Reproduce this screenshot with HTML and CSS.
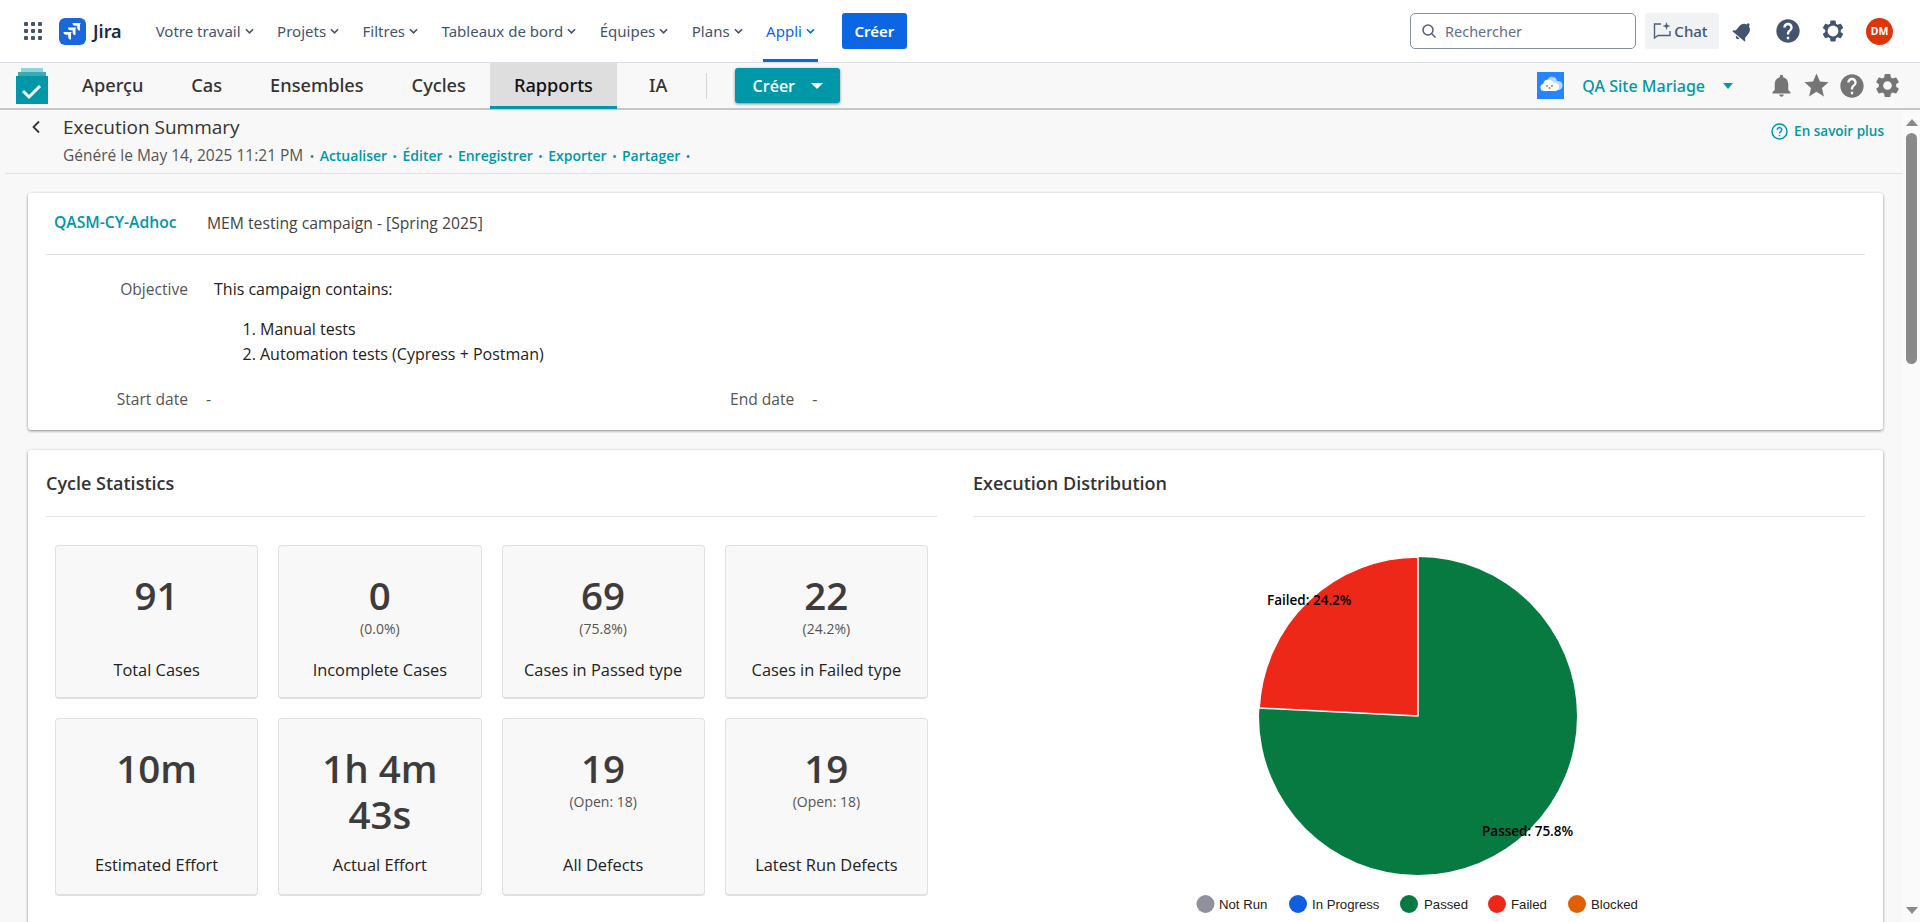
FILE: index.html
```html
<!DOCTYPE html>
<html lang="fr">
<head>
  <meta charset="UTF-8">
  <title>Execution Summary</title>
  <link rel="stylesheet" href="styles.css">
</head>
<body>

<svg class="defs" width="0" height="0">
  <symbol id="i-gear" viewBox="0 0 24 24"><path fill-rule="evenodd" d="M19.14 12.94c.04-.3.06-.61.06-.94 0-.32-.02-.64-.07-.94l2.03-1.58a.49.49 0 0 0 .12-.61l-1.92-3.32a.488.488 0 0 0-.59-.22l-2.39.96c-.5-.38-1.03-.7-1.62-.94l-.36-2.54a.484.484 0 0 0-.48-.41h-3.84c-.24 0-.43.17-.47.41l-.36 2.54c-.59.24-1.13.57-1.62.94l-2.39-.96c-.22-.08-.47 0-.59.22L2.74 8.87c-.12.21-.08.47.12.61l2.03 1.58c-.05.3-.09.63-.09.94s.02.64.07.94l-2.03 1.58a.49.49 0 0 0-.12.61l1.92 3.32c.12.22.37.29.59.22l2.39-.96c.5.38 1.03.7 1.62.94l.36 2.54c.05.24.24.41.48.41h3.84c.24 0 .44-.17.47-.41l.36-2.54c.59-.24 1.13-.56 1.62-.94l2.39.96c.22.08.47 0 .59-.22l1.92-3.32c.12-.22.07-.47-.12-.61l-2.01-1.58zM12 15.6c-1.98 0-3.6-1.62-3.6-3.6s1.62-3.6 3.6-3.6 3.6 1.62 3.6 3.6-1.62 3.6-3.6 3.6z"/></symbol>
  <symbol id="i-help" viewBox="0 0 24 24"><path d="M12 2C6.48 2 2 6.48 2 12s4.48 10 10 10 10-4.48 10-10S17.52 2 12 2zm1 17h-2v-2h2v2zm2.07-7.75l-.9.92C13.45 12.9 13 13.5 13 15h-2v-.5c0-1.1.45-2.1 1.17-2.83l1.24-1.26c.37-.36.59-.86.59-1.41 0-1.1-.9-2-2-2s-2 .9-2 2H8c0-2.21 1.79-4 4-4s4 1.79 4 4c0 .88-.36 1.68-.93 2.25z"/></symbol>
  <symbol id="i-bell" viewBox="0 0 24 24"><path d="M12 22c1.1 0 2-.9 2-2h-4c0 1.1.9 2 2 2zm6-6v-5c0-3.07-1.63-5.64-4.5-6.32V4c0-.83-.67-1.5-1.5-1.5s-1.5.67-1.5 1.5v.68C7.64 5.36 6 7.92 6 11v5l-2 2v1h16v-1l-2-2z"/></symbol>
  <symbol id="i-star" viewBox="0 0 24 24"><path d="M12 17.27L18.18 21l-1.64-7.03L22 9.24l-7.19-.61L12 2 9.19 8.63 2 9.24l5.46 4.73L5.82 21z"/></symbol>
</svg>

<header class="topnav">
  <svg class="apps" width="18" height="18" viewBox="0 0 18 18">
    <rect x="0" y="0" width="4" height="4" rx="1"/><rect x="7" y="0" width="4" height="4" rx="1"/><rect x="14" y="0" width="4" height="4" rx="1"/>
    <rect x="0" y="7" width="4" height="4" rx="1"/><rect x="7" y="7" width="4" height="4" rx="1"/><rect x="14" y="7" width="4" height="4" rx="1"/>
    <rect x="0" y="14" width="4" height="4" rx="1"/><rect x="7" y="14" width="4" height="4" rx="1"/><rect x="14" y="14" width="4" height="4" rx="1"/>
  </svg>
  <svg class="jira-logo" width="27" height="27" viewBox="0 0 27 27">
    <rect width="27" height="27" rx="6" fill="#1868db"/>
    <path fill="#fff" d="M22 5h-8.500a2.800 2.800 0 0 0 2.800 2.800h1.900v1.900a2.800 2.800 0 0 0 2.800 2.800V6z"/>
    <path fill="#fff" d="M17.500 9.500H9a2.800 2.800 0 0 0 2.800 2.800h1.900v1.900a2.800 2.800 0 0 0 2.800 2.800v-6.500z"/>
    <path fill="#fff" d="M13 14H4.500a2.800 2.800 0 0 0 2.800 2.800h1.900v1.900a2.800 2.800 0 0 0 2.800 2.800V15z"/>
  </svg>
  <span class="jira-name">Jira</span>
  <nav class="mainmenu">
    <a class="menu-item">Votre travail<svg class="chev" viewBox="0 0 10 6"><path d="M1 1l4 4 4-4"/></svg></a>
    <a class="menu-item">Projets<svg class="chev" viewBox="0 0 10 6"><path d="M1 1l4 4 4-4"/></svg></a>
    <a class="menu-item">Filtres<svg class="chev" viewBox="0 0 10 6"><path d="M1 1l4 4 4-4"/></svg></a>
    <a class="menu-item">Tableaux de bord<svg class="chev" viewBox="0 0 10 6"><path d="M1 1l4 4 4-4"/></svg></a>
    <a class="menu-item">Équipes<svg class="chev" viewBox="0 0 10 6"><path d="M1 1l4 4 4-4"/></svg></a>
    <a class="menu-item">Plans<svg class="chev" viewBox="0 0 10 6"><path d="M1 1l4 4 4-4"/></svg></a>
    <a class="menu-item active">Appli<svg class="chev" viewBox="0 0 10 6"><path d="M1 1l4 4 4-4"/></svg></a>
  </nav>
  <button class="create-top">Créer</button>

  <div class="top-right">
    <div class="search">
      <svg width="16" height="16" viewBox="0 0 16 16" fill="none" stroke="#505f79" stroke-width="1.5"><circle cx="7" cy="7" r="5"/><path d="M10.8 10.8L14.5 14.5"/></svg>
      <span>Rechercher</span>
    </div>
    <button class="chat">
      <svg width="20" height="20" viewBox="0 0 20 20" fill="none" stroke="#505f79" stroke-width="1.4"><path d="M9 3H2.500v14l3.500-2.500h12V10"/><path fill="#505f79" stroke="none" d="M14.500 1l1 3 3 1-3 1-1 3-1-3-3-1 3-1z"/></svg>
      Chat
    </button>
    <svg class="top-icon tilted" width="24" height="24"><use href="#i-bell"/></svg>
    <svg class="top-icon help-big" width="28" height="28"><use href="#i-help"/></svg>
    <svg class="top-icon gear-top" width="26" height="26" viewBox="0 0 24 24"><use href="#i-gear" width="24" height="24"/><circle cx="12" cy="12" r="5" fill="#fff"/></svg>
    <span class="avatar">DM</span>
  </div>
</header>

<div class="subnav">
  <svg class="tests-logo" width="32" height="36" viewBox="0 0 32 36">
    <rect x="5" y="0" width="22" height="4" fill="#8fd4da"/>
    <rect x="2" y="4" width="28" height="4" fill="#3ea9b5"/>
    <rect x="0" y="8" width="32" height="28" fill="#0097a8"/>
    <path d="M7 23l6 6 11-11" fill="none" stroke="#fff" stroke-width="3"/>
  </svg>
  <nav class="tabs">
    <a class="tab">Aperçu</a>
    <a class="tab">Cas</a>
    <a class="tab">Ensembles</a>
    <a class="tab">Cycles</a>
    <a class="tab selected">Rapports</a>
    <a class="tab tab-ia">IA</a>
  </nav>
  <span class="tab-sep"></span>
  <button class="create-sub">Créer<span class="caret-white"></span></button>

  <div class="sub-right">
    <svg class="cloud" width="27" height="27" viewBox="0 0 27 27">
      <rect width="27" height="27" fill="#2684ff"/>
      <path fill="#b9d8ff" d="M11 7a5 5 0 0 1 9 2 4.500 4.500 0 0 1 2 9h-8z"/>
      <path fill="#fff" d="M7 19a3.600 3.600 0 0 1-.8-7.100A5.400 5.400 0 0 1 16.500 10.800a4.200 4.200 0 0 1 2.500 8.200z"/>
      <circle cx="10" cy="14" r=".8" fill="#333"/><circle cx="15" cy="14" r=".8" fill="#333"/>
      <circle cx="12.500" cy="16" r="1" fill="#f0506e"/>
    </svg>
    <span class="project-name">QA Site Mariage</span>
    <span class="caret-teal"></span>
    <div class="sub-icons">
      <svg width="27" height="27"><use href="#i-bell"/></svg>
      <svg width="29" height="29"><use href="#i-star"/></svg>
      <svg width="28" height="28"><use href="#i-help"/></svg>
      <svg width="29" height="29"><use href="#i-gear"/></svg>
    </div>
  </div>
</div>

<div class="page">
  <main class="content">
    <div class="report-head">
      <div class="head-row">
        <div class="head-title">
          <svg width="10" height="14" viewBox="0 0 10 14" fill="none" stroke="#333" stroke-width="1.800"><path d="M8 1.500L2.500 7 8 12.500"/></svg>
          <h1>Execution Summary</h1>
        </div>
        <a class="learn">
          <svg width="17" height="17" viewBox="0 0 17 17" fill="none" stroke="#0097a8" stroke-width="1.500"><circle cx="8.500" cy="8.500" r="7.500"/><path d="M6.300 6.800a2.200 2.200 0 1 1 3.400 1.800c-.8.500-1.200 1-1.200 1.800"/><path d="M8.500 12v1.300"/></svg>
          En savoir plus
        </a>
      </div>
      <p class="generated">Généré le <span class="gen-date">May 14, 2025 11:21 PM</span> <b>•</b> <a>Actualiser</a> <b>•</b> <a>Éditer</a> <b>•</b> <a>Enregistrer</a> <b>•</b> <a>Exporter</a> <b>•</b> <a>Partager</a> <b>•</b></p>
    </div>

    <section class="card info-card">
      <div class="info-head">
        <a class="cycle-key">QASM-CY-Adhoc</a>
        <span class="cycle-name">MEM testing campaign - [Spring 2025]</span>
      </div>
      <div class="objective">
        <span class="label">Objective</span>
        <div class="objective-text">
          <p>This campaign contains:</p>
          <ol>
            <li>Manual tests</li>
            <li>Automation tests (Cypress + Postman)</li>
          </ol>
        </div>
      </div>
      <div class="dates">
        <div class="date-col"><span class="label">Start date</span><span class="date-val">-</span></div>
        <div class="date-col"><span class="label">End date</span><span class="date-val">-</span></div>
      </div>
    </section>

    <section class="card stats-card">
      <div class="stats-col">
        <h2>Cycle Statistics</h2>
        <div class="tiles">
          <div class="tile"><div class="num">91</div><div class="label-tile">Total Cases</div></div>
          <div class="tile"><div class="num">0</div><div class="sub">(0.0%)</div><div class="label-tile">Incomplete Cases</div></div>
          <div class="tile"><div class="num">69</div><div class="sub">(75.8%)</div><div class="label-tile">Cases in Passed type</div></div>
          <div class="tile"><div class="num">22</div><div class="sub">(24.2%)</div><div class="label-tile">Cases in Failed type</div></div>
          <div class="tile"><div class="num">10m</div><div class="label-tile">Estimated Effort</div></div>
          <div class="tile"><div class="num">1h 4m 43s</div><div class="label-tile">Actual Effort</div></div>
          <div class="tile"><div class="num">19</div><div class="sub">(Open: 18)</div><div class="label-tile">All Defects</div></div>
          <div class="tile"><div class="num">19</div><div class="sub">(Open: 18)</div><div class="label-tile">Latest Run Defects</div></div>
        </div>
      </div>
      <div class="stats-col">
        <h2>Execution Distribution</h2>
        <svg class="pie" width="892" height="404" viewBox="0 0 892 404">
          <circle cx="445" cy="199" r="159" fill="#067a41"/>
          <path d="M445 199L286.200 191A159 159 0 0 1 445 40Z" fill="#ed2819" stroke="#fff" stroke-width="1.500" stroke-linejoin="round"/>
          <text class="pie-label" x="294" y="88">Failed: 24.2%</text>
          <text class="pie-label" x="509" y="319">Passed: 75.8%</text>
          <circle cx="232.500" cy="387" r="9" fill="#8f929c"/><text class="legend" x="246" y="392">Not Run</text>
          <circle cx="325" cy="387" r="9" fill="#0f5fe0"/><text class="legend" x="339" y="392">In Progress</text>
          <circle cx="436" cy="387" r="9" fill="#067a41"/><text class="legend" x="451" y="392">Passed</text>
          <circle cx="524" cy="387" r="9" fill="#ed2819"/><text class="legend" x="538" y="392">Failed</text>
          <circle cx="604" cy="387" r="9" fill="#e06000"/><text class="legend" x="618" y="392">Blocked</text>
        </svg>
      </div>
    </section>
  </main>

  <aside class="scrollbar">
    <span class="arrow-up"></span>
    <span class="thumb"></span>
    <span class="arrow-down"></span>
  </aside>
</div>

</body>
</html>
```

FILE: styles.css
```css
html, body {
  margin: 0;
  height: 100%;
  overflow: hidden;
}

body {
  display: flex;
  flex-direction: column;
  background: #f8f8f8;
  color: #333;
  font-family: "Open Sans", "Noto Sans", sans-serif;
  font-size: 16px;
}

a { color: inherit; text-decoration: none; }
button { font-family: inherit; border: none; }

.defs { position: absolute; }

/* barre Jira */
.topnav {
  flex: none;
  height: 62px;
  display: flex;
  align-items: center;
  padding: 0 27px 0 24px;
  background: white;
  border-bottom: 1px solid #dcdfe4;
  font-family: "Noto Sans", sans-serif;
}

.apps { fill: #44546f; flex: none; margin-right: 17px; }
.jira-logo { flex: none; }
.jira-name {
  margin-left: 7px;
  font-size: 18px;
  font-weight: 600;
  color: #1d2a3e;
}

.mainmenu {
  display: flex;
  align-self: stretch;
  margin-left: 34px;
  gap: 23.5px;
}

.menu-item {
  position: relative;
  display: flex;
  align-items: center;
  gap: 4px;
  font-size: 15px;
  font-weight: 400;
  color: #44546f;
}

.chev {
  width: 9px;
  height: 6px;
  fill: none;
  stroke: currentColor;
  stroke-width: 1.8;
}

.menu-item.active { color: #0c66e4; }
.menu-item.active::after {
  content: "";
  position: absolute;
  left: -3px;
  right: -3px;
  bottom: 0;
  height: 3px;
  background: #0c66e4;
}

.create-top {
  height: 36px;
  width: 65px;
  margin-left: 27px;
  border-radius: 3px;
  background: #0c66e4;
  color: white;
  font-size: 15px;
  font-weight: 600;
}

.top-right {
  margin-left: auto;
  display: flex;
  align-items: center;
}

.search {
  width: 226px;
  height: 36px;
  box-sizing: border-box;
  display: flex;
  align-items: center;
  gap: 8px;
  padding-left: 10px;
  border: 1px solid #8590a2;
  border-radius: 5px;
  color: #626f86;
  font-size: 14.5px;
}

.chat {
  width: 74px;
  height: 36px;
  margin-left: 9px;
  padding: 0 4px 0 0;
  display: flex;
  align-items: center;
  justify-content: center;
  gap: 2px;
  background: #f1f2f4;
  border-radius: 3px;
  color: #44546f;
  font-size: 15px;
  font-weight: 500;
}

.top-icon { fill: #44546f; flex: none; }
.tilted { margin-left: 12px; transform: rotate(40deg); }
.help-big { margin-left: 19px; }
.gear-top { margin-left: 18px; }

.avatar {
  width: 27px;
  height: 27px;
  margin-left: 20px;
  border-radius: 50%;
  background: #de350b;
  color: white;
  font-size: 10.5px;
  font-weight: 700;
  display: flex;
  align-items: center;
  justify-content: center;
}

/* barre projet */
.subnav {
  flex: none;
  height: 45px;
  display: flex;
  align-items: center;
  padding-left: 16px;
  background: #f8f8f8;
  border-bottom: 2px solid #c6c6c6;
}

.tests-logo { flex: none; margin-right: 10px; }

.tabs { display: flex; align-self: stretch; }

.tab {
  display: flex;
  align-items: center;
  padding: 0 24px;
  font-family: "Noto Sans", sans-serif;
  font-size: 18.2px;
  font-weight: 500;
  color: #333;
  border-bottom: 3px solid transparent;
  margin-bottom: -1px;
}

.tab-ia { margin-left: 8px; }

.tab.selected {
  background: #dedede;
  border-bottom-color: #0097a8;
  color: #111;
}

.tab-sep {
  width: 1px;
  height: 26px;
  margin-left: 15px;
  background: #d5d5d5;
}

.create-sub {
  width: 105px;
  height: 35px;
  margin-left: 28px;
  display: flex;
  align-items: center;
  justify-content: center;
  gap: 16px;
  background: #0097a8;
  color: white;
  border-radius: 3px;
  box-shadow: 0 1px 3px rgba(0, 0, 0, 0.45);
  font-size: 16px;
  font-weight: 600;
}

.caret-white {
  border-left: 6px solid transparent;
  border-right: 6px solid transparent;
  border-top: 6px solid white;
}

.sub-right {
  margin-left: auto;
  display: flex;
  align-items: center;
  padding-right: 18px;
}

.project-name {
  margin-left: 18px;
  font-family: "Noto Sans", sans-serif;
  font-size: 16px;
  font-weight: 500;
  color: #0097a8;
}

.caret-teal {
  margin-left: 18px;
  border-left: 5.5px solid transparent;
  border-right: 5.5px solid transparent;
  border-top: 6px solid #0097a8;
}

.sub-icons {
  display: flex;
  align-items: center;
  gap: 7px;
  margin-left: 35px;
  fill: #757575;
}

/* contenu */
.page {
  flex: 1;
  min-height: 0;
  display: flex;
}

.content {
  flex: 1;
  min-width: 0;
  overflow: hidden;
}

.scrollbar {
  flex: none;
  width: 17px;
  display: flex;
  flex-direction: column;
  align-items: center;
  padding: 9px 0 8px;
  box-sizing: border-box;
  background: #fafafa;
}

.arrow-up {
  border-left: 6px solid transparent;
  border-right: 6px solid transparent;
  border-bottom: 7px solid #8a8a8a;
}

.thumb {
  width: 11px;
  height: 231px;
  margin-top: 7px;
  border-radius: 6px;
  background: #8a8a8a;
}

.arrow-down {
  margin-top: auto;
  border-left: 6px solid transparent;
  border-right: 6px solid transparent;
  border-top: 7px solid #8a8a8a;
}

.report-head {
  height: 64px;
  margin-left: 5px;
  padding: 6px 19px 0 26px;
  box-sizing: border-box;
  border-bottom: 1px solid #e2e2e2;
}

.head-row {
  display: flex;
  justify-content: space-between;
  align-items: center;
  height: 22px;
}

.head-title {
  display: flex;
  align-items: center;
  gap: 22px;
}

h1 {
  margin: 0;
  font-size: 19px;
  font-weight: 500;
  color: #333;
}

.learn {
  display: flex;
  align-items: center;
  gap: 6px;
  margin-top: 8px;
  font-size: 13.5px;
  font-weight: 600;
  color: #0097a8;
}

.generated {
  margin: 8px 0 0 32px;
  font-size: 15.5px;
  color: #555;
  line-height: 18px;
}

.gen-date { margin-right: 1px; }
.generated a { color: #0097a8; font-size: 14px; font-weight: 600; }
.generated b { color: #0097a8; font-size: 13px; font-weight: 400; margin: 0 1.2px; }

.card {
  margin: 19px 20px 0 28px;
  padding: 0 18px;
  background: white;
  border-radius: 3px;
  box-shadow: 0 1px 3px rgba(0, 0, 0, 0.45);
}

.info-card { height: 237px; box-sizing: border-box; }

.info-head {
  height: 62px;
  box-sizing: border-box;
  display: flex;
  align-items: center;
  padding: 0 8px 1px;
  border-bottom: 1px solid #e2e2e2;
}

.cycle-key {
  width: 153px;
  margin-bottom: 2px;
  font-size: 15.7px;
  font-weight: 600;
  color: #0097a8;
}

.cycle-name { font-size: 15.7px; color: #444; }

.label {
  display: block;
  width: 142px;
  flex: none;
  text-align: right;
  font-size: 15.6px;
  color: #555;
}

.objective {
  display: flex;
  gap: 26px;
  margin-top: 24px;
  line-height: 20px;
}

.objective-text p { margin: 0; color: #222; }

.objective-text ol {
  margin: 18px 0 0;
  padding-left: 46px;
  line-height: 25px;
  color: #222;
}

.dates {
  display: grid;
  grid-template-columns: repeat(3, 1fr);
  margin-top: 22px;
  line-height: 20px;
}

.date-col { display: flex; gap: 18px; color: #555; }

.stats-card {
  margin-top: 20px;
  display: grid;
  grid-template-columns: 1fr 1fr;
  gap: 36px;
  height: 480px;
}

h2 {
  margin: 0;
  height: 66px;
  line-height: 66px;
  border-bottom: 1px solid #e2e2e2;
  font-size: 18px;
  font-weight: 600;
  color: #333;
}

.tiles {
  display: grid;
  grid-template-columns: repeat(4, 1fr);
  grid-template-rows: 154px 178px;
  gap: 19px 20px;
  margin: 28px 9px 0;
}

.tile {
  display: flex;
  flex-direction: column;
  align-items: center;
  padding: 26px 8px 17px;
  background: #f8f8f8;
  border: 1px solid #e0e0e0;
  border-bottom-width: 2px;
  border-radius: 4px;
  text-align: center;
}

.tile:nth-child(n+5) { padding-bottom: 19px; }

.num {
  font-size: 38.5px;
  font-weight: 600;
  line-height: 46px;
  color: #3c3c3c;
}

.sub {
  font-size: 14px;
  line-height: 21px;
  color: #555;
}

.label-tile {
  margin-top: auto;
  font-size: 16.4px;
  line-height: 20px;
  color: #222;
}

.pie { display: block; }

.pie-label {
  font-family: "Open Sans", sans-serif;
  font-size: 13.5px;
  font-weight: 600;
  fill: #000;
}

.legend {
  font-family: "Liberation Sans", sans-serif;
  font-size: 13.2px;
  fill: #222;
}
```
